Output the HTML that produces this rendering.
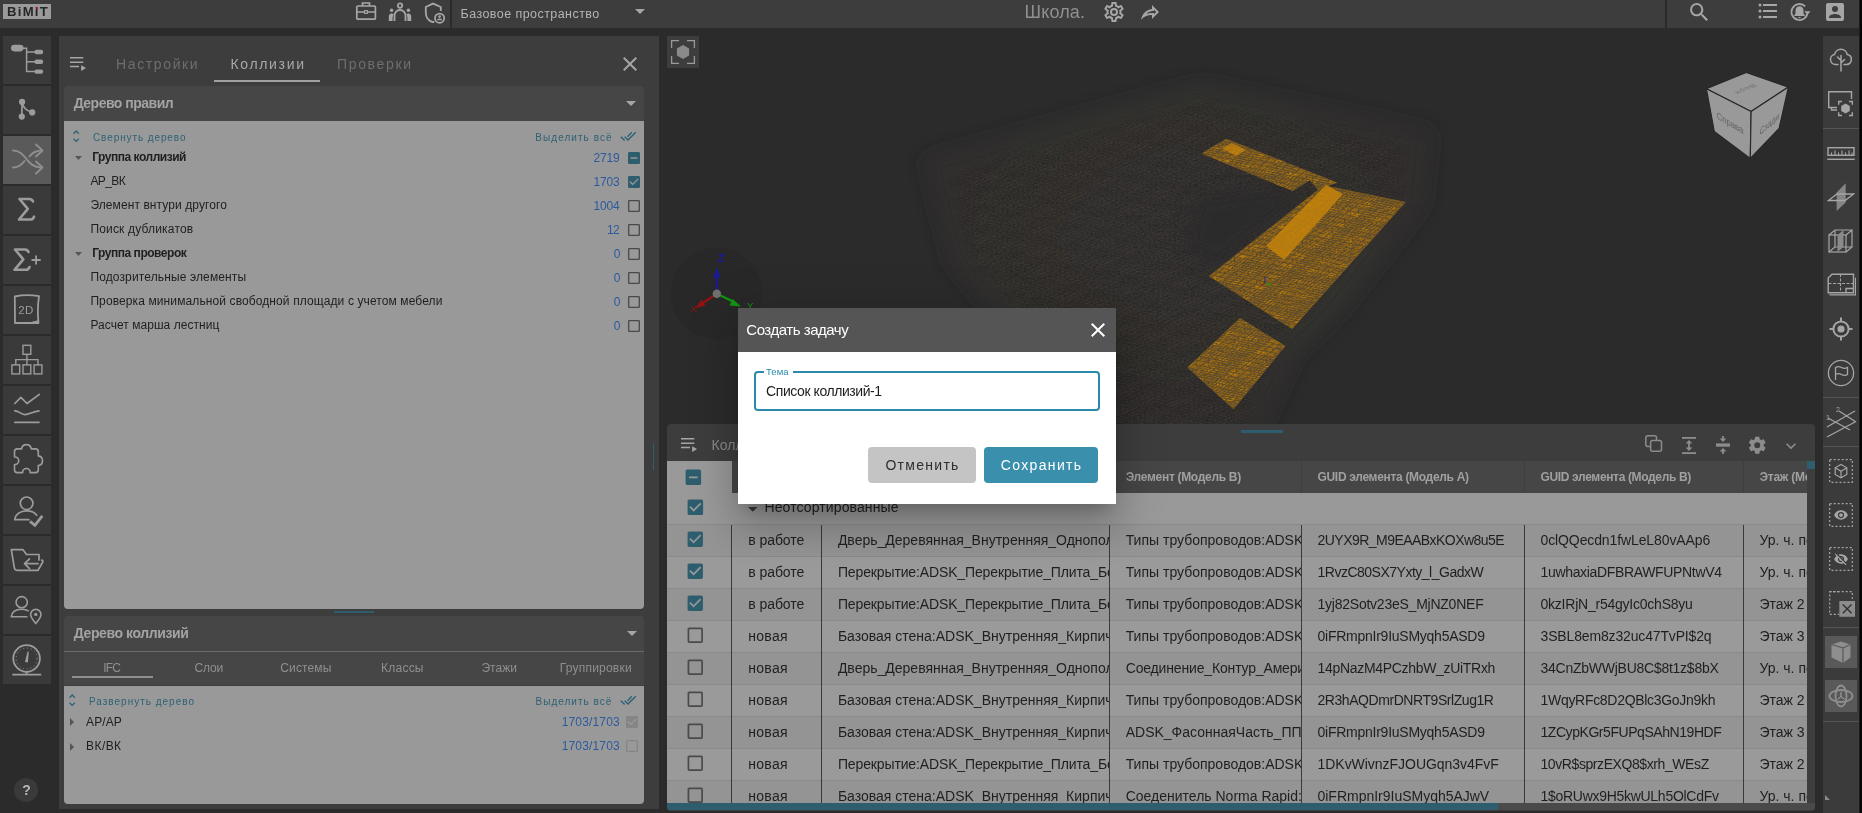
<!DOCTYPE html>
<html lang="ru"><head><meta charset="utf-8"><title>BIMIT</title><style>
html,body{margin:0;padding:0;}
body{width:1862px;height:813px;overflow:hidden;background:#2c2b2c;position:relative;font-family:"Liberation Sans",sans-serif;}
#app{position:absolute;left:0;top:0;width:1862px;height:813px;overflow:hidden;will-change:transform;}
.r{position:absolute;display:block;}
.t{position:absolute;white-space:nowrap;display:block;}
</style></head><body>
<div id="app">
<div class="r" style="left:0.0px;top:0.0px;width:1862.0px;height:28.0px;background:#3d3d3d;"></div>
<div class="r" style="left:3.0px;top:4.0px;width:48.0px;height:15.0px;background:#9a9a9a;"></div>
<span class="t" style="left:6.800px;top:3.600px;font-size:12.500px;line-height:16px;color:#262626;font-weight:700;letter-spacing:1.200px;transform:scaleX(1.05);transform-origin:0 0;">BiMiT</span>
<div class="r" style="left:35.9px;top:6.9px;width:2.2px;height:2.2px;background:#a81a1a;"></div>
<svg class="r" style="left:355px;top:1px" width="22" height="20" viewBox="0 0 22 20"><g fill="none" stroke="#a6a6a6" stroke-width="1.700"><rect x="1.800" y="5" width="18.600" height="13.200" rx="1"/><path d="M7.500 5V2h7v3M1.800 11h7.700M12.500 11h7.900"/><rect x="9.500" y="9.700" width="3" height="2.600" stroke-width="1.200"/></g></svg>
<svg class="r" style="left:388px;top:1px" width="24" height="22" viewBox="0 0 24 22"><g fill="none" stroke="#a6a6a6" stroke-width="1.8"><circle cx="12" cy="4.6" r="2.2"/><path d="M6.5 20v-5.5a5.5 5.5 0 0 1 11 0V20"/></g><g fill="#a6a6a6"><circle cx="3.6" cy="9.2" r="1.7"/><circle cx="20.4" cy="9.2" r="1.7"/><path d="M0.8 20v-4.5a3 3 0 0 1 4.8-2.4a8 8 0 0 0-1 3.9v3z"/><path d="M23.2 20v-4.5a3 3 0 0 0-4.8-2.4a8 8 0 0 1 1 3.9v3z"/></g></svg>
<svg class="r" style="left:424px;top:1px" width="22" height="24" viewBox="0 0 22 24"><g fill="none" stroke="#a6a6a6" stroke-width="1.8"><path d="M16.8 10V6L9 2.6L1.8 6v5.4c0 4.6 3 8.4 7.2 9.8c0.5-0.15 1-0.35 1.4-0.6"/><circle cx="15.6" cy="17.2" r="4.6"/></g><g fill="#a6a6a6"><circle cx="15.6" cy="15.6" r="1.3"/><path d="M12.9 19.3c0-1.2 1.8-1.8 2.7-1.8s2.7 0.6 2.7 1.8z"/></g></svg>
<div class="r" style="left:450.0px;top:0.0px;width:2.0px;height:28.0px;background:#2c2b2c;"></div>
<span class="t" id="t1" style="top:5.1px;font-size:12.5px;line-height:18px;color:#b4b4b4;left:460.5px;letter-spacing:0.441px;">Базовое пространство</span>
<svg class="r" style="left:635px;top:9px" width="10" height="5" viewBox="0 0 10 5"><path fill="#a6a6a6" d="M0 0h10L5 5z"/></svg>
<span class="t" id="t2" style="top:-0.2px;font-size:18px;line-height:25px;color:#909090;left:1024.5px;letter-spacing:0.156px;">Школа.</span>
<svg class="r" style="left:1101.7px;top:0.0px;" width="24" height="24" viewBox="0 0 24 24"><path fill="#a6a6a6" d="M12,8A4,4 0 0,1 16,12A4,4 0 0,1 12,16A4,4 0 0,1 8,12A4,4 0 0,1 12,8M12,10A2,2 0 0,0 10,12A2,2 0 0,0 12,14A2,2 0 0,0 14,12A2,2 0 0,0 12,10M10,22C9.75,22 9.54,21.82 9.5,21.58L9.13,18.93C8.5,18.68 7.96,18.34 7.44,17.94L4.95,18.95C4.73,19.03 4.46,18.95 4.34,18.73L2.34,15.27C2.21,15.05 2.27,14.78 2.46,14.63L4.57,12.97L4.5,12L4.57,11L2.46,9.37C2.27,9.22 2.21,8.95 2.34,8.73L4.34,5.27C4.46,5.05 4.73,4.96 4.95,5.05L7.44,6.05C7.96,5.66 8.5,5.32 9.13,5.07L9.5,2.42C9.54,2.18 9.75,2 10,2H14C14.25,2 14.46,2.18 14.5,2.42L14.87,5.07C15.5,5.32 16.04,5.66 16.56,6.05L19.05,5.05C19.27,4.96 19.54,5.05 19.66,5.27L21.66,8.73C21.79,8.95 21.73,9.22 21.54,9.37L19.43,11L19.5,12L19.43,13L21.54,14.63C21.73,14.78 21.79,15.05 21.66,15.27L19.66,18.73C19.54,18.95 19.27,19.04 19.05,18.95L16.56,17.95C16.04,18.34 15.5,18.68 14.87,18.93L14.5,21.58C14.46,21.82 14.25,22 14,22H10M11.25,4L10.88,6.61C9.68,6.86 8.62,7.5 7.85,8.39L5.44,7.35L4.69,8.65L6.8,10.2C6.4,11.37 6.4,12.64 6.8,13.8L4.68,15.36L5.43,16.66L7.86,15.62C8.63,16.5 9.68,17.14 10.87,17.38L11.24,20H12.76L13.13,17.39C14.32,17.14 15.37,16.5 16.14,15.62L18.57,16.66L19.32,15.36L17.2,13.81C17.6,12.64 17.6,11.37 17.2,10.2L19.31,8.65L18.56,7.35L16.15,8.39C15.38,7.5 14.32,6.86 13.12,6.62L12.75,4H11.25Z"/></svg>
<svg class="r" style="left:1137.8px;top:0.3px;" width="24" height="24" viewBox="0 0 24 24"><path fill="#a6a6a6" d="M14,5V9C7,10 4,15 3,20C5.5,16.5 9,14.9 14,14.9V19L21,12L14,5M16,9.83L18.17,12L16,14.17V12.9H14C11.93,12.9 10.07,13.28 8.34,13.85C9.74,12.46 11.54,11.37 14.28,11L16,10.73V9.83Z"/></svg>
<div class="r" style="left:1665.0px;top:0.0px;width:2.0px;height:28.0px;background:#2c2b2c;"></div>
<svg class="r" style="left:1687.2px;top:0.3px;" width="24.5" height="24.5" viewBox="0 0 24 24"><path fill="#a6a6a6" d="M9.5,3A6.5,6.5 0 0,1 16,9.5C16,11.11 15.41,12.59 14.44,13.73L14.71,14H15.5L20.5,19L19,20.5L14,15.5V14.71L13.73,14.44C12.59,15.41 11.11,16 9.5,16A6.5,6.5 0 0,1 3,9.5A6.5,6.5 0 0,1 9.5,3M9.5,5C7,5 5,7 5,9.5C5,12 7,14 9.5,14C12,14 14,12 14,9.5C14,7 12,5 9.5,5Z"/></svg>
<svg class="r" style="left:1755.7px;top:-0.6px;" width="24" height="24" viewBox="0 0 24 24"><path fill="#a6a6a6" d="M7,5H21V7H7V5M7,13V11H21V13H7M4,4.5A1.5,1.5 0 0,1 5.5,6A1.5,1.5 0 0,1 4,7.5A1.5,1.5 0 0,1 2.5,6A1.5,1.5 0 0,1 4,4.5M4,10.5A1.5,1.5 0 0,1 5.5,12A1.5,1.5 0 0,1 4,13.5A1.5,1.5 0 0,1 2.5,12A1.5,1.5 0 0,1 4,10.5M7,19V17H21V19H7M4,16.5A1.5,1.5 0 0,1 5.5,18A1.5,1.5 0 0,1 4,19.5A1.5,1.5 0 0,1 2.5,18A1.5,1.5 0 0,1 4,16.5Z"/></svg>
<svg class="r" style="left:1788.300px;top:0px" width="24" height="24" viewBox="0 0 24 24"><path fill="none" stroke="#a6a6a6" stroke-width="1.8" d="M19.500 12a8 8 0 1 1-2.300-5.600"/><path fill="#a6a6a6" d="M16.2 11.2h6.4l-3.2 3.6zM11.500 6.2c-2.4 0-4 1.800-4 4.200v3.200l-1.300 1.600v0.800h10.600v-0.800l-1.300-1.600v-3.200c0-2.400-1.600-4.200-4-4.200zM10.200 17h2.600a1.300 1.300 0 0 1-2.600 0z"/></svg>
<svg class="r" style="left:1823.0px;top:0.0px;" width="24" height="24" viewBox="0 0 24 24"><path fill="#a6a6a6" d="M6,17C6,15 10,13.9 12,13.9C14,13.9 18,15 18,17V18H6M15,9A3,3 0 0,1 12,12A3,3 0 0,1 9,9A3,3 0 0,1 12,6A3,3 0 0,1 15,9M3,5V19A2,2 0 0,0 5,21H19A2,2 0 0,0 21,19V5A2,2 0 0,0 19,3H5C3.89,3 3,3.9 3,5Z"/></svg>
<div class="r" style="left:3.0px;top:36.0px;width:48.0px;height:48.0px;background:#3a3a3a;"></div>
<div class="r" style="left:3.0px;top:86.0px;width:48.0px;height:48.0px;background:#3a3a3a;"></div>
<div class="r" style="left:3.0px;top:136.0px;width:48.0px;height:48.0px;background:#5a5a5a;"></div>
<div class="r" style="left:3.0px;top:186.0px;width:48.0px;height:48.0px;background:#3a3a3a;"></div>
<div class="r" style="left:3.0px;top:236.0px;width:48.0px;height:48.0px;background:#3a3a3a;"></div>
<div class="r" style="left:3.0px;top:286.0px;width:48.0px;height:48.0px;background:#3a3a3a;"></div>
<div class="r" style="left:3.0px;top:336.0px;width:48.0px;height:48.0px;background:#3a3a3a;"></div>
<div class="r" style="left:3.0px;top:386.0px;width:48.0px;height:48.0px;background:#3a3a3a;"></div>
<div class="r" style="left:3.0px;top:436.0px;width:48.0px;height:48.0px;background:#3a3a3a;"></div>
<div class="r" style="left:3.0px;top:486.0px;width:48.0px;height:48.0px;background:#3a3a3a;"></div>
<div class="r" style="left:3.0px;top:536.0px;width:48.0px;height:48.0px;background:#3a3a3a;"></div>
<div class="r" style="left:3.0px;top:586.0px;width:48.0px;height:48.0px;background:#3a3a3a;"></div>
<div class="r" style="left:3.0px;top:636.0px;width:48.0px;height:48.0px;background:#3a3a3a;"></div>
<svg class="r" style="left:3px;top:36px" width="48" height="48" viewBox="0 0 48 48"><g fill="#9c9c9c"><rect x="8" y="8.800" width="12.500" height="6.600" rx="3.300"/><rect x="31.400" y="13.800" width="8.800" height="4.400" rx="2.200"/><rect x="31.400" y="23.600" width="8.800" height="4.400" rx="2.200"/><rect x="31.400" y="33.400" width="8.800" height="4.400" rx="2.200"/></g><path d="M19 12.200h4.600V35.600H32M23.600 16H32M23.600 25.800H32" fill="none" stroke="#9c9c9c" stroke-width="1.500"/></svg>
<svg class="r" style="left:3px;top:86px" width="48" height="48" viewBox="0 0 48 48"><g fill="#9c9c9c"><circle cx="19.100" cy="15.900" r="3.100"/><circle cx="18.800" cy="30.600" r="3.100"/><circle cx="29.200" cy="26.400" r="3.100"/></g><path d="M19.100 16L18.800 30.600M19.100 16c0.500 5 4 8.500 10 10.400" fill="none" stroke="#9c9c9c" stroke-width="1.700"/></svg>
<svg class="r" style="left:3px;top:136px" width="48" height="48" viewBox="0 0 48 48"><g fill="none" stroke="#8e8e8e" stroke-width="1.900" stroke-linecap="round" stroke-linejoin="round"><path d="M10 14.500c14 0 12 17 29 17M10 31.500c6 0 9-3 11.500-6.500M26.500 20.500c2.500-3.500 6-6 12.500-6"/><path d="M33 8.500l6.500 6l-6.500 6M33 25.500l6.500 6l-6.500 6"/></g></svg>
<svg class="r" style="left:3px;top:186px" width="48" height="48" viewBox="0 0 48 48"><path d="M30 15.500c-1-2.200-2-2.500-3.500-2.500H16.500l8.300 9.800L16 33.500h11.500c1.500 0 2.800-0.800 3.500-2.800" fill="none" stroke="#9c9c9c" stroke-width="2.600" stroke-linecap="round" stroke-linejoin="round"/></svg>
<svg class="r" style="left:3px;top:236px" width="48" height="48" viewBox="0 0 48 48"><path d="M25.500 16c-1-2.200-2-2.500-3.500-2.500H12l8.300 9.800L11.500 33.800H23c1.500 0 2.800-0.800 3.500-2.800" fill="none" stroke="#9c9c9c" stroke-width="2.600" stroke-linecap="round" stroke-linejoin="round"/><path d="M28.500 24h9.200M33.100 19.400v9.200" stroke="#9c9c9c" stroke-width="1.800"/></svg>
<svg class="r" style="left:3px;top:286px" width="48" height="48" viewBox="0 0 48 48"><path d="M11.800 10.500c8-1.800 16-1.800 24.200-0.300c-1.300 9-1.500 18-0.500 26.800H12z" fill="none" stroke="#9c9c9c" stroke-width="1.800" stroke-linejoin="round"/><path d="M26 36.500l9-2.300v2.500z" fill="#9c9c9c"/><text x="15.300" y="28.300" font-family="Liberation Sans, sans-serif" font-size="11.500" fill="#9c9c9c" letter-spacing="0.3">2D</text></svg>
<svg class="r" style="left:3px;top:336px" width="48" height="48" viewBox="0 0 48 48"><g fill="none" stroke="#9c9c9c" stroke-width="1.400"><rect x="20" y="9.300" width="7.800" height="9"/><rect x="8.900" y="28.900" width="7.800" height="9"/><rect x="20" y="28.900" width="7.800" height="9"/><rect x="31.100" y="28.900" width="7.800" height="9"/><path d="M23.900 18.300v10.600M12.800 28.900v-5.300H35v5.300"/></g></svg>
<svg class="r" style="left:3px;top:386px" width="48" height="48" viewBox="0 0 48 48"><g fill="none" stroke="#9c9c9c" stroke-width="1.700" stroke-linecap="round" stroke-linejoin="round"><path d="M11.800 17.500l6.100-6.200l6.100 6.200L36.400 8.400"/><path d="M11.800 24.900c3.500-0.500 6 3.500 10 3.700c4 0.200 8-3 14.200-3.700"/><path d="M11.800 36.300H36"/></g></svg>
<svg class="r" style="left:3px;top:436px" width="48" height="48" viewBox="0 0 48 48"><g transform="translate(8.700 5.850) scale(1.4)"><path fill="none" stroke="#9c9c9c" stroke-width="1.150" stroke-linejoin="round" d="M22,13.500C22,15.260 20.700,16.720 19,16.960V20A2,2 0 0,1 17,22H13.200V21.700A2.700,2.700 0 0,0 10.500,19C9,19 7.800,20.210 7.800,21.700V22H4A2,2 0 0,1 2,20V16.200H2.300C3.790,16.200 5,15 5,13.500C5,12 3.790,10.800 2.300,10.800H2V7A2,2 0 0,1 4,5H7.040C7.280,3.300 8.740,2 10.500,2C12.260,2 13.720,3.300 13.960,5H17A2,2 0 0,1 19,7V10.040C20.700,10.280 22,11.740 22,13.500Z"/></g></svg>
<svg class="r" style="left:3px;top:486px" width="48" height="48" viewBox="0 0 48 48"><g fill="none" stroke="#9c9c9c" stroke-width="1.700"><circle cx="23.600" cy="17.300" r="6.300"/><path d="M26.500 33.700H11.800c0.500-5 5-8.800 11.800-8.800c5 0 8.500 1.800 10.500 4.800"/></g><path d="M27 35.300l4.900 4l7.400-9.500" fill="none" stroke="#9c9c9c" stroke-width="2.800"/></svg>
<svg class="r" style="left:3px;top:536px" width="48" height="48" viewBox="0 0 48 48"><g fill="none" stroke="#9c9c9c" stroke-width="1.700" stroke-linejoin="round" stroke-linecap="round"><path d="M36 24v-5.500H23.500L20 13.700H8.300l3 18c0.300 1.800 1 2.600 2.800 2.600H35l4.800-8.300c0.300-1-0.200-1.800-1.200-1.800"/><path d="M22 27.700h13M26.500 22.800l-5 4.900l5 4.900"/></g></svg>
<svg class="r" style="left:3px;top:586px" width="48" height="48" viewBox="0 0 48 48"><g fill="none" stroke="#9c9c9c" stroke-width="1.600"><circle cx="18.700" cy="16.200" r="5.600"/><path d="M24.500 30.800H8.300c0.500-4.600 4.400-7.600 10.400-7.600c3 0 5.300 0.700 7 2"/><path d="M32.800 37.500c-3.500-4-5.200-6.500-5.200-8.900a5.200 5.200 0 0 1 10.400 0c0 2.400-1.700 4.900-5.200 8.900z"/></g><circle cx="32.800" cy="28.400" r="1.700" fill="#9c9c9c"/></svg>
<svg class="r" style="left:3px;top:636px" width="48" height="48" viewBox="0 0 48 48"><g fill="none" stroke="#9c9c9c" stroke-width="1.800"><circle cx="23.600" cy="22.500" r="13.300"/><path d="M23.600 35.800v2.500M9.300 38.600h29"/></g><circle cx="23.600" cy="22.500" r="10.500" fill="none" stroke="#9c9c9c" stroke-width="0.800" stroke-dasharray="1.200 2.600"/><path d="M22 26l2.500-10.500l1.300 0.300l-0.900 10.800z" fill="#9c9c9c"/></svg>
<div class="r" style="left:14px;top:778px;width:24px;height:24px;border-radius:12px;background:#3a3a3a"></div>
<span class="t" id="t3" style="top:780.0px;font-size:14px;line-height:20px;color:#b8b8b8;left:22.2px;font-weight:700;">?</span>
<div class="r" style="left:59.0px;top:36.0px;width:600.0px;height:773.0px;background:#3d3d3d;"></div>
<svg class="r" style="left:69px;top:56px" width="18" height="16" viewBox="0 0 18 16"><path d="M1 1.800h13.300M1 6.200h13.300M1 10.600h9" stroke="#a6a6a6" stroke-width="1.500" fill="none"/><path d="M12.200 9.200v5.800l4.800-2.900z" fill="#a6a6a6"/></svg>
<span class="t" id="t4" style="top:54.0px;font-size:14px;line-height:20px;color:#6e6e6e;left:116.0px;letter-spacing:1.630px;">Настройки</span>
<span class="t" id="t5" style="top:54.0px;font-size:14px;line-height:20px;color:#a8a8a8;left:230.5px;letter-spacing:1.663px;">Коллизии</span>
<span class="t" id="t6" style="top:54.0px;font-size:14px;line-height:20px;color:#6e6e6e;left:337.0px;letter-spacing:1.652px;">Проверки</span>
<div class="r" style="left:214.0px;top:80.0px;width:106.0px;height:2.0px;background:#a0a0a0;"></div>
<svg class="r" style="left:618.3px;top:52.3px;" width="24" height="24" viewBox="0 0 24 24"><path fill="#a6a6a6" d="M19,6.41L17.59,5L12,10.59L6.41,5L5,6.41L10.59,12L5,17.59L6.41,19L12,13.41L17.59,19L19,17.59L13.41,12L19,6.41Z"/></svg>
<div class="r" style="left:64.0px;top:86.0px;width:580.0px;height:35.0px;background:#464646;border-radius:4px 4px 0 0;"></div>
<span class="t" id="t7" style="top:93.0px;font-size:14px;line-height:20px;color:#a3a3a3;left:73.7px;font-weight:700;letter-spacing:-0.504px;">Дерево правил</span>
<svg class="r" style="left:626px;top:101px" width="10" height="5" viewBox="0 0 10 5"><path fill="#a6a6a6" d="M0 0h10L5 5z"/></svg>
<div class="r" style="left:64.0px;top:121.0px;width:580.0px;height:487.5px;background:#999999;border-radius:0 0 4px 4px;"></div>
<svg class="r" style="left:67.6px;top:128.0px;" width="16.4" height="16.4" viewBox="0 0 24 24"><path fill="#2e6175" d="M12,18.17L8.83,15L7.41,16.41L12,21L16.59,16.41L15.17,15M12,5.83L15.17,9L16.58,7.59L12,3L7.41,7.59L8.83,9L12,5.83Z"/></svg>
<span class="t" id="t8" style="top:131.0px;font-size:10px;line-height:14px;color:#2e6175;left:93.0px;letter-spacing:0.898px;">Свернуть дерево</span>
<span class="t" id="t9" style="top:131.0px;font-size:10px;line-height:14px;color:#2e6175;left:535.3px;letter-spacing:1.047px;">Выделить всё</span>
<svg class="r" style="left:620.0px;top:127.8px;" width="16.5" height="16.5" viewBox="0 0 24 24"><path fill="#2e6175" d="M0.41,13.41L6,19L7.41,17.58L1.83,12M22.24,5.58L11.66,16.17L7.5,12L6.07,13.41L11.66,19L23.66,7M18,7L16.59,5.58L10.24,11.93L11.66,13.34L18,7Z"/></svg>
<svg class="r" style="left:74.500px;top:156.3px" width="7" height="4" viewBox="0 0 7 4"><path fill="#555" d="M0 0h7L3.5 4z"/></svg>
<span class="t" id="t10" style="top:148.8px;font-size:12px;line-height:17px;color:#1f1f1f;left:92.2px;font-weight:700;letter-spacing:-0.473px;">Группа коллизий</span>
<span class="t" id="t11" style="top:149.9px;font-size:12px;line-height:17px;color:#2c5a9e;left:593.4px;letter-spacing:-0.101px;">2719</span>
<svg class="r" style="left:626.0px;top:149.8px;" width="16" height="16" viewBox="0 0 24 24"><path fill="#2e5e6e" d="M17,13H7V11H17M19,3H5C3.89,3 3,3.89 3,5V19A2,2 0 0,0 5,21H19A2,2 0 0,0 21,19V5C21,3.89 20.1,3 19,3Z"/></svg>
<span class="t" id="t12" style="top:172.8px;font-size:12px;line-height:17px;color:#1f1f1f;left:90.4px;letter-spacing:-0.572px;">АР_ВК</span>
<span class="t" id="t13" style="top:173.9px;font-size:12px;line-height:17px;color:#2c5a9e;left:593.4px;letter-spacing:-0.101px;">1703</span>
<svg class="r" style="left:626.0px;top:173.8px;" width="16" height="16" viewBox="0 0 24 24"><path fill="#2e5e6e" d="M10,17L5,12L6.41,10.58L10,14.17L17.59,6.58L19,8M19,3H5C3.89,3 3,3.89 3,5V19A2,2 0 0,0 5,21H19A2,2 0 0,0 21,19V5C21,3.89 20.1,3 19,3Z"/></svg>
<span class="t" id="t14" style="top:196.8px;font-size:12px;line-height:17px;color:#1f1f1f;left:90.4px;letter-spacing:0.090px;">Элемент внтури другого</span>
<span class="t" id="t15" style="top:197.9px;font-size:12px;line-height:17px;color:#2c5a9e;left:593.4px;letter-spacing:-0.101px;">1004</span>
<svg class="r" style="left:626.0px;top:197.8px;" width="16" height="16" viewBox="0 0 24 24"><path fill="#4a4a4a" d="M19,3H5C3.89,3 3,3.89 3,5V19A2,2 0 0,0 5,21H19A2,2 0 0,0 21,19V5C21,3.89 20.1,3 19,3M19,5V19H5V5H19Z"/></svg>
<span class="t" id="t16" style="top:220.8px;font-size:12px;line-height:17px;color:#1f1f1f;left:90.4px;letter-spacing:0.179px;">Поиск дубликатов</span>
<span class="t" id="t17" style="top:221.9px;font-size:12px;line-height:17px;color:#2c5a9e;left:607.0px;letter-spacing:-0.559px;">12</span>
<svg class="r" style="left:626.0px;top:221.8px;" width="16" height="16" viewBox="0 0 24 24"><path fill="#4a4a4a" d="M19,3H5C3.89,3 3,3.89 3,5V19A2,2 0 0,0 5,21H19A2,2 0 0,0 21,19V5C21,3.89 20.1,3 19,3M19,5V19H5V5H19Z"/></svg>
<svg class="r" style="left:74.500px;top:252.3px" width="7" height="4" viewBox="0 0 7 4"><path fill="#555" d="M0 0h7L3.5 4z"/></svg>
<span class="t" id="t18" style="top:244.8px;font-size:12px;line-height:17px;color:#1f1f1f;left:92.2px;font-weight:700;letter-spacing:-0.469px;">Группа проверок</span>
<span class="t" id="t19" style="top:245.9px;font-size:12px;line-height:17px;color:#2c5a9e;left:613.7px;letter-spacing:-0.588px;">0</span>
<svg class="r" style="left:626.0px;top:245.8px;" width="16" height="16" viewBox="0 0 24 24"><path fill="#4a4a4a" d="M19,3H5C3.89,3 3,3.89 3,5V19A2,2 0 0,0 5,21H19A2,2 0 0,0 21,19V5C21,3.89 20.1,3 19,3M19,5V19H5V5H19Z"/></svg>
<span class="t" id="t20" style="top:268.8px;font-size:12px;line-height:17px;color:#1f1f1f;left:90.4px;letter-spacing:0.131px;">Подозрительные элементы</span>
<span class="t" id="t21" style="top:269.9px;font-size:12px;line-height:17px;color:#2c5a9e;left:613.7px;letter-spacing:-0.588px;">0</span>
<svg class="r" style="left:626.0px;top:269.8px;" width="16" height="16" viewBox="0 0 24 24"><path fill="#4a4a4a" d="M19,3H5C3.89,3 3,3.89 3,5V19A2,2 0 0,0 5,21H19A2,2 0 0,0 21,19V5C21,3.89 20.1,3 19,3M19,5V19H5V5H19Z"/></svg>
<span class="t" id="t22" style="top:292.8px;font-size:12px;line-height:17px;color:#1f1f1f;left:90.4px;letter-spacing:0.107px;">Проверка минимальной свободной площади с учетом мебели</span>
<span class="t" id="t23" style="top:293.9px;font-size:12px;line-height:17px;color:#2c5a9e;left:613.7px;letter-spacing:-0.588px;">0</span>
<svg class="r" style="left:626.0px;top:293.8px;" width="16" height="16" viewBox="0 0 24 24"><path fill="#4a4a4a" d="M19,3H5C3.89,3 3,3.89 3,5V19A2,2 0 0,0 5,21H19A2,2 0 0,0 21,19V5C21,3.89 20.1,3 19,3M19,5V19H5V5H19Z"/></svg>
<span class="t" id="t24" style="top:316.8px;font-size:12px;line-height:17px;color:#1f1f1f;left:90.4px;letter-spacing:0.042px;">Расчет марша лестниц</span>
<span class="t" id="t25" style="top:317.9px;font-size:12px;line-height:17px;color:#2c5a9e;left:613.7px;letter-spacing:-0.588px;">0</span>
<svg class="r" style="left:626.0px;top:317.8px;" width="16" height="16" viewBox="0 0 24 24"><path fill="#4a4a4a" d="M19,3H5C3.89,3 3,3.89 3,5V19A2,2 0 0,0 5,21H19A2,2 0 0,0 21,19V5C21,3.89 20.1,3 19,3M19,5V19H5V5H19Z"/></svg>
<div class="r" style="left:652.6px;top:443.0px;width:1.5px;height:27.0px;background:#2e5e6e;"></div>
<div class="r" style="left:334.0px;top:610.5px;width:40.0px;height:2.0px;background:#2e5e6e;"></div>
<div class="r" style="left:64.0px;top:616.0px;width:580.0px;height:69.0px;background:#464646;border-radius:4px 4px 0 0;"></div>
<span class="t" id="t26" style="top:623.3px;font-size:14px;line-height:20px;color:#a3a3a3;left:73.8px;font-weight:700;letter-spacing:-0.410px;">Дерево коллизий</span>
<svg class="r" style="left:627px;top:631px" width="10" height="5" viewBox="0 0 10 5"><path fill="#a6a6a6" d="M0 0h10L5 5z"/></svg>
<div class="r" style="left:64.0px;top:651.0px;width:580.0px;height:1.0px;background:#6a6a6a;"></div>
<span class="t" id="t27" style="top:660.1px;font-size:12px;line-height:17px;color:#8f8f8f;left:103.3px;letter-spacing:-0.822px;">IFC</span>
<span class="t" id="t28" style="top:660.1px;font-size:12px;line-height:17px;color:#8f8f8f;left:194.6px;letter-spacing:-0.196px;">Слои</span>
<span class="t" id="t29" style="top:660.1px;font-size:12px;line-height:17px;color:#8f8f8f;left:280.3px;letter-spacing:0.120px;">Системы</span>
<span class="t" id="t30" style="top:660.1px;font-size:12px;line-height:17px;color:#8f8f8f;left:381.0px;letter-spacing:0.241px;">Классы</span>
<span class="t" id="t31" style="top:660.1px;font-size:12px;line-height:17px;color:#8f8f8f;left:481.4px;letter-spacing:0.052px;">Этажи</span>
<span class="t" id="t32" style="top:660.1px;font-size:12px;line-height:17px;color:#8f8f8f;left:559.8px;letter-spacing:0.205px;">Группировки</span>
<div class="r" style="left:72.0px;top:676.0px;width:81.0px;height:2.0px;background:#8f8f8f;"></div>
<div class="r" style="left:64.0px;top:685.5px;width:580.0px;height:118.5px;background:#999999;border-radius:0 0 4px 4px;"></div>
<svg class="r" style="left:63.8px;top:692.1px;" width="16.4" height="16.4" viewBox="0 0 24 24"><path fill="#2e6175" d="M12,18.17L8.83,15L7.41,16.41L12,21L16.59,16.41L15.17,15M12,5.83L15.17,9L16.58,7.59L12,3L7.41,7.59L8.83,9L12,5.83Z"/></svg>
<span class="t" id="t33" style="top:695.0px;font-size:10px;line-height:14px;color:#2e6175;left:89.0px;letter-spacing:0.995px;">Развернуть дерево</span>
<span class="t" id="t34" style="top:695.0px;font-size:10px;line-height:14px;color:#2e6175;left:535.6px;letter-spacing:1.001px;">Выделить всё</span>
<svg class="r" style="left:620.0px;top:692.0px;" width="16.5" height="16.5" viewBox="0 0 24 24"><path fill="#2e6175" d="M0.41,13.41L6,19L7.41,17.58L1.83,12M22.24,5.58L11.66,16.17L7.5,12L6.07,13.41L11.66,19L23.66,7M18,7L16.59,5.58L10.24,11.93L11.66,13.34L18,7Z"/></svg>
<svg class="r" style="left:70px;top:718.2px" width="4" height="8" viewBox="0 0 4 8"><path fill="#555" d="M0 0v8L4 4z"/></svg>
<span class="t" id="t35" style="top:713.7px;font-size:12px;line-height:17px;color:#1f1f1f;left:86.1px;letter-spacing:0.085px;">АР/АР</span>
<span class="t" id="t36" style="top:713.7px;font-size:12px;line-height:17px;color:#2c5a9e;left:561.7px;letter-spacing:0.158px;">1703/1703</span>
<svg class="r" style="left:624.0px;top:713.7px;" width="16" height="16" viewBox="0 0 24 24"><path fill="#858585" d="M10,17L5,12L6.41,10.58L10,14.17L17.59,6.58L19,8M19,3H5C3.89,3 3,3.89 3,5V19A2,2 0 0,0 5,21H19A2,2 0 0,0 21,19V5C21,3.89 20.1,3 19,3Z"/></svg>
<svg class="r" style="left:70px;top:742.5px" width="4" height="8" viewBox="0 0 4 8"><path fill="#555" d="M0 0v8L4 4z"/></svg>
<span class="t" id="t37" style="top:738.0px;font-size:12px;line-height:17px;color:#1f1f1f;left:86.1px;letter-spacing:0.418px;">ВК/ВК</span>
<span class="t" id="t38" style="top:738.0px;font-size:12px;line-height:17px;color:#2c5a9e;left:561.7px;letter-spacing:0.158px;">1703/1703</span>
<svg class="r" style="left:624.0px;top:738.0px;" width="16" height="16" viewBox="0 0 24 24"><path fill="#858585" d="M19,3H5C3.89,3 3,3.89 3,5V19A2,2 0 0,0 5,21H19A2,2 0 0,0 21,19V5C21,3.89 20.1,3 19,3M19,5V19H5V5H19Z"/></svg>
<svg class="r" style="left:0;top:28px" width="1862" height="400" viewBox="0 28 1862 400">
<defs>
<pattern id="pu" width="40" height="6" patternUnits="userSpaceOnUse" patternTransform="matrix(0.98 0.2 -0.79 0.61 0 0)"><path d="M0 0.500H40M0 3.500H22" stroke="#5b4a2c" stroke-width="1.1" fill="none" opacity="0.9"/></pattern>
<pattern id="pv" width="7" height="40" patternUnits="userSpaceOnUse" patternTransform="matrix(0.98 0.2 -0.79 0.61 0 0)"><path d="M0.500 0V40M4 6V25" stroke="#5b4a2c" stroke-width="1.1" fill="none" opacity="0.85"/></pattern>
<pattern id="pw" width="23" height="17" patternUnits="userSpaceOnUse" patternTransform="matrix(0.98 0.2 -0.79 0.61 0 0)"><rect x="2" y="2" width="9" height="6" fill="#d08a08" opacity="0.55"/><rect x="13" y="9" width="7" height="5" fill="#6b5630" opacity="0.5"/></pattern>
<pattern id="bu" width="30" height="5" patternUnits="userSpaceOnUse" patternTransform="matrix(0.98 0.2 -0.9 0.42 0 0)"><path d="M0 0.500H30M4 3H19" stroke="#4b443e" stroke-width="0.9" fill="none" opacity="0.5"/></pattern>
<pattern id="bv" width="6" height="34" patternUnits="userSpaceOnUse" patternTransform="matrix(0.98 0.2 -0.9 0.42 0 0)"><path d="M0.500 0V34M3.500 5V21" stroke="#242222" stroke-width="0.9" fill="none" opacity="0.55"/></pattern>
<radialGradient id="bg1" cx="0.5" cy="0.42" r="0.62"><stop offset="0" stop-color="#363230"/><stop offset="0.6" stop-color="#33302f"/><stop offset="1" stop-color="#2e2c2c"/></radialGradient>
<filter id="bl" x="-10%" y="-10%" width="120%" height="120%"><feGaussianBlur stdDeviation="9"/></filter>
<filter id="bl1"><feGaussianBlur stdDeviation="0.7"/></filter>
<filter id="nz" x="0" y="0" width="100%" height="100%" color-interpolation-filters="sRGB"><feTurbulence type="fractalNoise" baseFrequency="0.45" numOctaves="2" seed="7" result="n"/><feColorMatrix in="n" values="0 0 0 0 0.12  0 0 0 0 0.11  0 0 0 0 0.11  1.3 0 0 0 -0.55" result="c"/><feComposite in="c" in2="SourceGraphic" operator="in"/></filter>
<filter id="nz2" x="0" y="0" width="100%" height="100%" color-interpolation-filters="sRGB"><feTurbulence type="fractalNoise" baseFrequency="0.5" numOctaves="2" seed="11" result="n"/><feColorMatrix in="n" values="0 0 0 0 0.33  0 0 0 0 0.27  0 0 0 0 0.16  2.2 0 0 0 -0.9" result="c"/><feComposite in="c" in2="SourceGraphic" operator="in"/></filter>
<filter id="bl8" x="-10%" y="-10%" width="120%" height="120%"><feGaussianBlur stdDeviation="9"/></filter>
<mask id="bm" maskUnits="userSpaceOnUse" x="880" y="40" width="600" height="420"><polygon points="948,172 1201,100 1408,144 1402,200 1322,300 1280,344 1240,440 1120,440 970,256" fill="#fff" filter="url(#bl8)"/></mask>
<clipPath id="vclip"><rect x="667" y="28" width="1156" height="396"/></clipPath>
</defs>
<g clip-path="url(#vclip)">
<polygon points="926,160 1201,84 1430,132 1422,206 1338,312 1296,354 1256,440 1100,440 952,262" fill="url(#bg1)" filter="url(#bl)"/>
<g mask="url(#bm)">
<polygon points="940,166 1201,92 1418,138 1411,203 1328,308 1286,350 1246,440 1112,440 962,258" fill="url(#bu)"/>
<polygon points="940,166 1201,92 1418,138 1411,203 1328,308 1286,350 1246,440 1112,440 962,258" fill="url(#bv)"/>
<polygon points="940,166 1201,92 1418,138 1411,203 1328,308 1286,350 1246,440 1112,440 962,258" fill="#000" filter="url(#nz)"/>
</g>
<polygon points="1196,196 1290,184 1300,200 1212,272 1186,246" fill="#2b2929" opacity="0.75" filter="url(#bl)"/>
<polygon points="1201.600,153.600 1226.200,138.800 1337,182.400 1318,190 1310,180 1292.600,191" fill="#9a6912" filter="url(#bl1)"/>
<polygon points="1201.600,153.600 1226.200,138.800 1337,182.400 1318,190 1310,180 1292.600,191" fill="url(#pw)"/>
<polygon points="1201.600,153.600 1226.200,138.800 1337,182.400 1318,190 1310,180 1292.600,191" fill="url(#pu)"/>
<polygon points="1201.600,153.600 1226.200,138.800 1337,182.400 1318,190 1310,180 1292.600,191" fill="url(#pv)"/>
<polygon points="1201.600,153.600 1226.200,138.800 1337,182.400 1318,190 1310,180 1292.600,191" fill="#000" filter="url(#nz2)"/>
<polygon points="1327,186 1405.700,202 1292,329 1209,276 1319.700,188.500" fill="#9a6912" filter="url(#bl1)"/>
<polygon points="1327,186 1405.700,202 1292,329 1209,276 1319.700,188.500" fill="url(#pw)"/>
<polygon points="1327,186 1405.700,202 1292,329 1209,276 1319.700,188.500" fill="url(#pu)"/>
<polygon points="1327,186 1405.700,202 1292,329 1209,276 1319.700,188.500" fill="url(#pv)"/>
<polygon points="1327,186 1405.700,202 1292,329 1209,276 1319.700,188.500" fill="#000" filter="url(#nz2)"/>
<polygon points="1240,318 1285.300,346 1233.600,409.300 1187.600,367.600" fill="#9a6912" filter="url(#bl1)"/>
<polygon points="1240,318 1285.300,346 1233.600,409.300 1187.600,367.600" fill="url(#pw)"/>
<polygon points="1240,318 1285.300,346 1233.600,409.300 1187.600,367.600" fill="url(#pu)"/>
<polygon points="1240,318 1285.300,346 1233.600,409.300 1187.600,367.600" fill="url(#pv)"/>
<polygon points="1240,318 1285.300,346 1233.600,409.300 1187.600,367.600" fill="#000" filter="url(#nz2)"/>
<polygon points="1326,185 1343,194 1284,260 1266,246" fill="#c9860a" opacity="0.8"/>
<polygon points="1222,148 1232,143 1246,150 1236,156" fill="#c9860a" opacity="0.7"/>
<path d="M1265 283v-6" stroke="#1a1a9a" stroke-width="1"/><path d="M1265 283l-4 3" stroke="#9a1010" stroke-width="1"/><path d="M1265 283l6 2" stroke="#109a10" stroke-width="1"/>
</g>
<circle cx="716.8" cy="293.8" r="45.8" fill="#292828"/>
<path d="M716.8 293.8V274" stroke="#1a1a98" stroke-width="2.2"/><path d="M716.8 267.500l-3.600 10h7.200z" fill="#1a1a98"/>
<path d="M716.800 293.800L702 303.500" stroke="#961212" stroke-width="2.2"/><path d="M695.500 308l6-8.500l4 6.200z" fill="#961212"/>
<path d="M716.800 293.800L732 301" stroke="#129612" stroke-width="2.2"/><path d="M741 306.500l-11.500-1l3.200-6.600z" fill="#129612"/>
<circle cx="716.8" cy="293.8" r="4.2" fill="#707070"/>
<text x="717.700" y="261.700" font-size="11.500" font-weight="700" fill="#1a1a98" font-family="Liberation Sans, sans-serif">Z</text>
<text x="690.700" y="312.200" font-size="9.500" fill="#961212" font-family="Liberation Sans, sans-serif">X</text>
<text x="747" y="309" font-size="9.500" fill="#129612" font-family="Liberation Sans, sans-serif">Y</text>
<g stroke="#2a2929" stroke-width="1.2" stroke-linejoin="round" fill="#999"><polygon points="1746.300,72.400 1788.400,87.100 1751.100,111.500 1706.400,88.800"/><polygon points="1706.400,88.800 1751.100,111.500 1750.300,158.400 1714.300,131.500"/><polygon points="1751.100,111.500 1788.400,87.100 1779.100,128.300 1750.300,158.400"/></g>
<g font-family="Liberation Sans, sans-serif" fill="#606060" font-size="9"><text transform="matrix(0.86,0.50,0.10,1.10,1717,118.500)">Справа</text><text transform="matrix(0.74,-0.64,-0.10,1.15,1759.500,135.500)">Сзади</text><text transform="matrix(-0.95,0.42,-0.75,-0.32,1753,84)" font-size="9" fill="#737373">Верх</text></g>
</svg>
<div class="r" style="left:667.0px;top:36.0px;width:32.0px;height:32.0px;background:#3d3d3d;"></div>
<svg class="r" style="left:667px;top:36px" width="32" height="32" viewBox="0 0 32 32"><path d="M12 4.600H4.600V12M20 4.600h7.400V12M12 27.400H4.600V20M20 27.400h7.400V20" fill="none" stroke="#9a9a9a" stroke-width="1.3"/><path d="M16 9l6.100 3.500v7L16 23l-6.100-3.500v-7z" fill="#8a8a8a"/></svg>
<div class="r" style="left:667.0px;top:424.0px;width:1148.0px;height:386.5px;background:#3d3d3d;border-radius:4px 4px 3px 3px;"></div>
<div class="r" style="left:1241.0px;top:430.0px;width:42.0px;height:2.5px;background:#2e5e6e;"></div>
<svg class="r" style="left:679.700px;top:436.900px" width="18" height="16" viewBox="0 0 18 16"><path d="M1 1.800h13.300M1 6.200h13.300M1 10.600h9" stroke="#a6a6a6" stroke-width="1.500" fill="none"/><path d="M12.200 9.200v5.800l4.800-2.900z" fill="#a6a6a6"/></svg>
<span class="t" id="t39" style="top:435.0px;font-size:14px;line-height:20px;color:#8a8a8a;left:711.4px;letter-spacing:0.092px;">Коллизии</span>
<svg class="r" style="left:1645.300px;top:435.100px" width="18" height="18" viewBox="0 0 18 18"><g fill="none" stroke="#8c8c8c" stroke-width="1.500"><path d="M5 11.500H2.800a2 2 0 0 1-2-2V2.800a2 2 0 0 1 2-2h6.700a2 2 0 0 1 2 2V5"/><rect x="5.600" y="5.600" width="10.900" height="10.600" rx="2"/></g></svg>
<svg class="r" style="left:1682px;top:436.900px" width="14" height="17" viewBox="0 0 14 17"><g fill="#8c8c8c"><rect x="0" y="0" width="14" height="1.800"/><rect x="0" y="15.200" width="14" height="1.800"/><rect x="6.100" y="5.500" width="1.800" height="6"/><path d="M7 3l3.400 3.600h-6.800zM7 14l3.400-3.600h-6.800z"/></g></svg>
<svg class="r" style="left:1716px;top:436.200px" width="14" height="18" viewBox="0 0 14 18"><g fill="#8c8c8c"><rect x="0" y="7.400" width="14" height="3.300"/><rect x="6.100" y="0" width="1.800" height="3.500"/><rect x="6.100" y="14.500" width="1.800" height="3.500"/><path d="M7 6l3.400-3.400h-6.800zM7 12l3.400 3.400h-6.800z"/></g></svg>
<svg class="r" style="left:1746.8px;top:434.8px;" width="20.5" height="20.5" viewBox="0 0 24 24"><path fill="#8c8c8c" d="M12,15.5A3.5,3.5 0 0,1 8.5,12A3.5,3.5 0 0,1 12,8.5A3.5,3.5 0 0,1 15.5,12A3.5,3.5 0 0,1 12,15.5M19.43,12.97C19.47,12.65 19.5,12.33 19.5,12C19.5,11.67 19.47,11.34 19.43,11L21.54,9.37C21.73,9.22 21.78,8.95 21.66,8.73L19.66,5.27C19.54,5.05 19.27,4.96 19.05,5.05L16.56,6.05C16.04,5.66 15.5,5.32 14.87,5.07L14.5,2.42C14.46,2.18 14.25,2 14,2H10C9.75,2 9.54,2.18 9.5,2.42L9.13,5.07C8.5,5.32 7.96,5.66 7.44,6.05L4.95,5.05C4.73,4.96 4.46,5.05 4.34,5.27L2.34,8.73C2.21,8.95 2.27,9.22 2.46,9.37L4.57,11C4.53,11.34 4.5,11.67 4.5,12C4.5,12.33 4.53,12.65 4.57,12.97L2.46,14.63C2.27,14.78 2.21,15.05 2.34,15.27L4.34,18.73C4.46,18.95 4.73,19.03 4.95,18.95L7.44,17.94C7.96,18.34 8.5,18.68 9.13,18.93L9.5,21.58C9.54,21.82 9.75,22 10,22H14C14.25,22 14.46,21.82 14.5,21.58L14.87,18.93C15.5,18.67 16.04,18.34 16.56,17.94L19.05,18.95C19.27,19.03 19.54,18.95 19.66,18.73L21.66,15.27C21.78,15.05 21.73,14.78 21.54,14.63L19.43,12.97Z"/></svg>
<svg class="r" style="left:1780.8px;top:435.7px;" width="20" height="20" viewBox="0 0 24 24"><path fill="#8c8c8c" d="M7.41,8.58L12,13.17L16.59,8.58L18,10L12,16L6,10L7.41,8.58Z"/></svg>
<div class="r" style="left:667.0px;top:461.0px;width:64.5px;height:31.7px;background:#999;"></div>
<div class="r" style="left:731.5px;top:461.0px;width:1075.9px;height:31.7px;background:#464646;"></div>
<div class="r" style="left:821.0px;top:461.0px;width:1.0px;height:31.7px;background:#3e3e3e;"></div>
<div class="r" style="left:1109.2px;top:461.0px;width:1.0px;height:31.7px;background:#3e3e3e;"></div>
<div class="r" style="left:1300.8px;top:461.0px;width:1.0px;height:31.7px;background:#3e3e3e;"></div>
<div class="r" style="left:1523.9px;top:461.0px;width:1.0px;height:31.7px;background:#3e3e3e;"></div>
<div class="r" style="left:1743.1px;top:461.0px;width:1.0px;height:31.7px;background:#3e3e3e;"></div>
<svg class="r" style="left:682.6px;top:466.6px;" width="20.7" height="20.7" viewBox="0 0 24 24"><path fill="#2e5e6e" d="M17,13H7V11H17M19,3H5C3.89,3 3,3.89 3,5V19A2,2 0 0,0 5,21H19A2,2 0 0,0 21,19V5C21,3.89 20.1,3 19,3Z"/></svg>
<span class="t" id="t40" style="top:468.5px;font-size:12px;line-height:17px;color:#a0a0a0;left:1125.7px;font-weight:700;letter-spacing:-0.305px;">Элемент (Модель B)</span>
<span class="t" id="t41" style="top:468.5px;font-size:12px;line-height:17px;color:#a0a0a0;left:1317.5px;font-weight:700;letter-spacing:-0.317px;">GUID элемента (Модель A)</span>
<span class="t" id="t42" style="top:468.5px;font-size:12px;line-height:17px;color:#a0a0a0;left:1540.5px;font-weight:700;letter-spacing:-0.347px;">GUID элемента (Модель B)</span>
<span class="t" id="t43" style="top:468.5px;font-size:12px;line-height:17px;color:#a0a0a0;left:1759.5px;font-weight:700;letter-spacing:-0.25px;width:47.9px;overflow:hidden;">Этаж (Модель A)</span>
<div class="r" style="left:667.0px;top:492.7px;width:1140.4px;height:310.8px;background:#999;"></div>
<svg class="r" style="left:684.6px;top:496.6px;" width="20.7" height="20.7" viewBox="0 0 24 24"><path fill="#2e5e6e" d="M10,17L5,12L6.41,10.58L10,14.17L17.59,6.58L19,8M19,3H5C3.89,3 3,3.89 3,5V19A2,2 0 0,0 5,21H19A2,2 0 0,0 21,19V5C21,3.89 20.1,3 19,3Z"/></svg>
<svg class="r" style="left:747.500px;top:507px" width="9.500" height="4.800" viewBox="0 0 10 5"><path fill="#3c3c3c" d="M0 0h10L5 5z"/></svg>
<span class="t" id="t44" style="top:497.3px;font-size:14px;line-height:20px;color:#1f1f1f;left:764.5px;letter-spacing:0.110px;">Неотсортированные</span>
<div class="r" style="left:667.0px;top:524.2px;width:1140.4px;height:32.0px;background:#949494;"></div>
<div class="r" style="left:667.0px;top:523.7px;width:1140.4px;height:1.0px;background:#8a8a8a;"></div>
<svg class="r" style="left:684.8px;top:529.0px;clip-path:inset(0 0 0.0px 0);" width="20.5" height="20.5" viewBox="0 0 24 24"><path fill="#2e5e6e" d="M10,17L5,12L6.41,10.58L10,14.17L17.59,6.58L19,8M19,3H5C3.89,3 3,3.89 3,5V19A2,2 0 0,0 5,21H19A2,2 0 0,0 21,19V5C21,3.89 20.1,3 19,3Z"/></svg>
<span class="t" id="t45" style="left:748.2px;top:530.0px;font-size:14px;line-height:20px;color:#1f1f1f;width:72.8px;overflow:hidden;letter-spacing:-0.048px;">в работе</span>
<span class="t" id="t46" style="left:837.9px;top:530.0px;font-size:14px;line-height:20px;color:#1f1f1f;width:271.3px;overflow:hidden;">Дверь_Деревянная_Внутренняя_Однопольная</span>
<span class="t" id="t47" style="left:1125.7px;top:530.0px;font-size:14px;line-height:20px;color:#1f1f1f;width:175.1px;overflow:hidden;">Типы трубопроводов:ADSK_</span>
<span class="t" id="t48" style="left:1317.5px;top:530.0px;font-size:14px;line-height:20px;color:#1f1f1f;width:206.4px;overflow:hidden;letter-spacing:-0.535px;">2UYX9R_M9EAABxKOXw8u5E</span>
<span class="t" id="t49" style="left:1540.5px;top:530.0px;font-size:14px;line-height:20px;color:#1f1f1f;width:202.6px;overflow:hidden;letter-spacing:-0.110px;">0clQQecdn1fwLeL80vAAp6</span>
<span class="t" id="t50" style="left:1759.5px;top:530.0px;font-size:14px;line-height:20px;color:#1f1f1f;width:47.4px;overflow:hidden;">Ур. ч. пола</span>
<div class="r" style="left:667.0px;top:556.2px;width:1140.4px;height:32.0px;background:#9a9a9a;"></div>
<div class="r" style="left:667.0px;top:555.7px;width:1140.4px;height:1.0px;background:#8a8a8a;"></div>
<svg class="r" style="left:684.8px;top:561.0px;clip-path:inset(0 0 0.0px 0);" width="20.5" height="20.5" viewBox="0 0 24 24"><path fill="#2e5e6e" d="M10,17L5,12L6.41,10.58L10,14.17L17.59,6.58L19,8M19,3H5C3.89,3 3,3.89 3,5V19A2,2 0 0,0 5,21H19A2,2 0 0,0 21,19V5C21,3.89 20.1,3 19,3Z"/></svg>
<span class="t" id="t51" style="left:748.2px;top:562.0px;font-size:14px;line-height:20px;color:#1f1f1f;width:72.8px;overflow:hidden;letter-spacing:-0.048px;">в работе</span>
<span class="t" id="t52" style="left:837.9px;top:562.0px;font-size:14px;line-height:20px;color:#1f1f1f;width:271.3px;overflow:hidden;letter-spacing:-0.130px;">Перекрытие:ADSK_Перекрытие_Плита_Бетон</span>
<span class="t" id="t53" style="left:1125.7px;top:562.0px;font-size:14px;line-height:20px;color:#1f1f1f;width:175.1px;overflow:hidden;">Типы трубопроводов:ADSK_</span>
<span class="t" id="t54" style="left:1317.5px;top:562.0px;font-size:14px;line-height:20px;color:#1f1f1f;width:206.4px;overflow:hidden;letter-spacing:-0.497px;">1RvzC80SX7Yxty_l_GadxW</span>
<span class="t" id="t55" style="left:1540.5px;top:562.0px;font-size:14px;line-height:20px;color:#1f1f1f;width:202.6px;overflow:hidden;letter-spacing:-0.335px;">1uwhaxiaDFBRAWFUPNtwV4</span>
<span class="t" id="t56" style="left:1759.5px;top:562.0px;font-size:14px;line-height:20px;color:#1f1f1f;width:47.4px;overflow:hidden;">Ур. ч. пола</span>
<div class="r" style="left:667.0px;top:588.2px;width:1140.4px;height:32.0px;background:#949494;"></div>
<div class="r" style="left:667.0px;top:587.7px;width:1140.4px;height:1.0px;background:#8a8a8a;"></div>
<svg class="r" style="left:684.8px;top:593.0px;clip-path:inset(0 0 0.0px 0);" width="20.5" height="20.5" viewBox="0 0 24 24"><path fill="#2e5e6e" d="M10,17L5,12L6.41,10.58L10,14.17L17.59,6.58L19,8M19,3H5C3.89,3 3,3.89 3,5V19A2,2 0 0,0 5,21H19A2,2 0 0,0 21,19V5C21,3.89 20.1,3 19,3Z"/></svg>
<span class="t" id="t57" style="left:748.2px;top:594.0px;font-size:14px;line-height:20px;color:#1f1f1f;width:72.8px;overflow:hidden;letter-spacing:-0.048px;">в работе</span>
<span class="t" id="t58" style="left:837.9px;top:594.0px;font-size:14px;line-height:20px;color:#1f1f1f;width:271.3px;overflow:hidden;letter-spacing:-0.130px;">Перекрытие:ADSK_Перекрытие_Плита_Бетон</span>
<span class="t" id="t59" style="left:1125.7px;top:594.0px;font-size:14px;line-height:20px;color:#1f1f1f;width:175.1px;overflow:hidden;">Типы трубопроводов:ADSK_</span>
<span class="t" id="t60" style="left:1317.5px;top:594.0px;font-size:14px;line-height:20px;color:#1f1f1f;width:206.4px;overflow:hidden;letter-spacing:-0.238px;">1yj82Sotv23eS_MjNZ0NEF</span>
<span class="t" id="t61" style="left:1540.5px;top:594.0px;font-size:14px;line-height:20px;color:#1f1f1f;width:202.6px;overflow:hidden;letter-spacing:-0.228px;">0kzIRjN_r54gyIc0chS8yu</span>
<span class="t" id="t62" style="left:1759.5px;top:594.0px;font-size:14px;line-height:20px;color:#1f1f1f;width:47.4px;overflow:hidden;">Этаж 2</span>
<div class="r" style="left:667.0px;top:620.2px;width:1140.4px;height:32.0px;background:#9a9a9a;"></div>
<div class="r" style="left:667.0px;top:619.7px;width:1140.4px;height:1.0px;background:#8a8a8a;"></div>
<svg class="r" style="left:684.8px;top:625.0px;clip-path:inset(0 0 0.0px 0);" width="20.5" height="20.5" viewBox="0 0 24 24"><path fill="#4a4a4a" d="M19,3H5C3.89,3 3,3.89 3,5V19A2,2 0 0,0 5,21H19A2,2 0 0,0 21,19V5C21,3.89 20.1,3 19,3M19,5V19H5V5H19Z"/></svg>
<span class="t" id="t63" style="left:748.2px;top:626.0px;font-size:14px;line-height:20px;color:#1f1f1f;width:72.8px;overflow:hidden;letter-spacing:0.332px;">новая</span>
<span class="t" id="t64" style="left:837.9px;top:626.0px;font-size:14px;line-height:20px;color:#1f1f1f;width:271.3px;overflow:hidden;">Базовая стена:ADSK_Внутренняя_Кирпичная</span>
<span class="t" id="t65" style="left:1125.7px;top:626.0px;font-size:14px;line-height:20px;color:#1f1f1f;width:175.1px;overflow:hidden;">Типы трубопроводов:ADSK_</span>
<span class="t" id="t66" style="left:1317.5px;top:626.0px;font-size:14px;line-height:20px;color:#1f1f1f;width:206.4px;overflow:hidden;letter-spacing:-0.250px;">0iFRmpnIr9IuSMyqh5ASD9</span>
<span class="t" id="t67" style="left:1540.5px;top:626.0px;font-size:14px;line-height:20px;color:#1f1f1f;width:202.6px;overflow:hidden;letter-spacing:-0.154px;">3SBL8em8z32uc47TvPI$2q</span>
<span class="t" id="t68" style="left:1759.5px;top:626.0px;font-size:14px;line-height:20px;color:#1f1f1f;width:47.4px;overflow:hidden;">Этаж 3</span>
<div class="r" style="left:667.0px;top:652.2px;width:1140.4px;height:32.0px;background:#949494;"></div>
<div class="r" style="left:667.0px;top:651.7px;width:1140.4px;height:1.0px;background:#8a8a8a;"></div>
<svg class="r" style="left:684.8px;top:657.0px;clip-path:inset(0 0 0.0px 0);" width="20.5" height="20.5" viewBox="0 0 24 24"><path fill="#4a4a4a" d="M19,3H5C3.89,3 3,3.89 3,5V19A2,2 0 0,0 5,21H19A2,2 0 0,0 21,19V5C21,3.89 20.1,3 19,3M19,5V19H5V5H19Z"/></svg>
<span class="t" id="t69" style="left:748.2px;top:658.0px;font-size:14px;line-height:20px;color:#1f1f1f;width:72.8px;overflow:hidden;letter-spacing:0.332px;">новая</span>
<span class="t" id="t70" style="left:837.9px;top:658.0px;font-size:14px;line-height:20px;color:#1f1f1f;width:271.3px;overflow:hidden;">Дверь_Деревянная_Внутренняя_Однопольная</span>
<span class="t" id="t71" style="left:1125.7px;top:658.0px;font-size:14px;line-height:20px;color:#1f1f1f;width:175.1px;overflow:hidden;letter-spacing:-0.160px;">Соединение_Контур_Америка</span>
<span class="t" id="t72" style="left:1317.5px;top:658.0px;font-size:14px;line-height:20px;color:#1f1f1f;width:206.4px;overflow:hidden;letter-spacing:-0.310px;">14pNazM4PCzhbW_zUiTRxh</span>
<span class="t" id="t73" style="left:1540.5px;top:658.0px;font-size:14px;line-height:20px;color:#1f1f1f;width:202.6px;overflow:hidden;letter-spacing:-0.254px;">34CnZbWWjBU8C$8t1z$8bX</span>
<span class="t" id="t74" style="left:1759.5px;top:658.0px;font-size:14px;line-height:20px;color:#1f1f1f;width:47.4px;overflow:hidden;">Ур. ч. пола</span>
<div class="r" style="left:667.0px;top:684.2px;width:1140.4px;height:32.0px;background:#9a9a9a;"></div>
<div class="r" style="left:667.0px;top:683.7px;width:1140.4px;height:1.0px;background:#8a8a8a;"></div>
<svg class="r" style="left:684.8px;top:689.0px;clip-path:inset(0 0 0.0px 0);" width="20.5" height="20.5" viewBox="0 0 24 24"><path fill="#4a4a4a" d="M19,3H5C3.89,3 3,3.89 3,5V19A2,2 0 0,0 5,21H19A2,2 0 0,0 21,19V5C21,3.89 20.1,3 19,3M19,5V19H5V5H19Z"/></svg>
<span class="t" id="t75" style="left:748.2px;top:690.0px;font-size:14px;line-height:20px;color:#1f1f1f;width:72.8px;overflow:hidden;letter-spacing:0.332px;">новая</span>
<span class="t" id="t76" style="left:837.9px;top:690.0px;font-size:14px;line-height:20px;color:#1f1f1f;width:271.3px;overflow:hidden;">Базовая стена:ADSK_Внутренняя_Кирпичная</span>
<span class="t" id="t77" style="left:1125.7px;top:690.0px;font-size:14px;line-height:20px;color:#1f1f1f;width:175.1px;overflow:hidden;">Типы трубопроводов:ADSK_</span>
<span class="t" id="t78" style="left:1317.5px;top:690.0px;font-size:14px;line-height:20px;color:#1f1f1f;width:206.4px;overflow:hidden;letter-spacing:-0.438px;">2R3hAQDmrDNRT9SrlZug1R</span>
<span class="t" id="t79" style="left:1540.5px;top:690.0px;font-size:14px;line-height:20px;color:#1f1f1f;width:202.6px;overflow:hidden;letter-spacing:-0.300px;">1WqyRFc8D2QBlc3GoJn9kh</span>
<span class="t" id="t80" style="left:1759.5px;top:690.0px;font-size:14px;line-height:20px;color:#1f1f1f;width:47.4px;overflow:hidden;">Этаж 2</span>
<div class="r" style="left:667.0px;top:716.2px;width:1140.4px;height:32.0px;background:#949494;"></div>
<div class="r" style="left:667.0px;top:715.7px;width:1140.4px;height:1.0px;background:#8a8a8a;"></div>
<svg class="r" style="left:684.8px;top:721.0px;clip-path:inset(0 0 0.0px 0);" width="20.5" height="20.5" viewBox="0 0 24 24"><path fill="#4a4a4a" d="M19,3H5C3.89,3 3,3.89 3,5V19A2,2 0 0,0 5,21H19A2,2 0 0,0 21,19V5C21,3.89 20.1,3 19,3M19,5V19H5V5H19Z"/></svg>
<span class="t" id="t81" style="left:748.2px;top:722.0px;font-size:14px;line-height:20px;color:#1f1f1f;width:72.8px;overflow:hidden;letter-spacing:0.332px;">новая</span>
<span class="t" id="t82" style="left:837.9px;top:722.0px;font-size:14px;line-height:20px;color:#1f1f1f;width:271.3px;overflow:hidden;">Базовая стена:ADSK_Внутренняя_Кирпичная</span>
<span class="t" id="t83" style="left:1125.7px;top:722.0px;font-size:14px;line-height:20px;color:#1f1f1f;width:175.1px;overflow:hidden;">ADSK_ФасоннаяЧасть_ПП_</span>
<span class="t" id="t84" style="left:1317.5px;top:722.0px;font-size:14px;line-height:20px;color:#1f1f1f;width:206.4px;overflow:hidden;letter-spacing:-0.250px;">0iFRmpnIr9IuSMyqh5ASD9</span>
<span class="t" id="t85" style="left:1540.5px;top:722.0px;font-size:14px;line-height:20px;color:#1f1f1f;width:202.6px;overflow:hidden;letter-spacing:-0.444px;">1ZCypKGr5FUPqSAhN19HDF</span>
<span class="t" id="t86" style="left:1759.5px;top:722.0px;font-size:14px;line-height:20px;color:#1f1f1f;width:47.4px;overflow:hidden;">Этаж 3</span>
<div class="r" style="left:667.0px;top:748.2px;width:1140.4px;height:32.0px;background:#9a9a9a;"></div>
<div class="r" style="left:667.0px;top:747.7px;width:1140.4px;height:1.0px;background:#8a8a8a;"></div>
<svg class="r" style="left:684.8px;top:753.0px;clip-path:inset(0 0 0.0px 0);" width="20.5" height="20.5" viewBox="0 0 24 24"><path fill="#4a4a4a" d="M19,3H5C3.89,3 3,3.89 3,5V19A2,2 0 0,0 5,21H19A2,2 0 0,0 21,19V5C21,3.89 20.1,3 19,3M19,5V19H5V5H19Z"/></svg>
<span class="t" id="t87" style="left:748.2px;top:754.0px;font-size:14px;line-height:20px;color:#1f1f1f;width:72.8px;overflow:hidden;letter-spacing:0.332px;">новая</span>
<span class="t" id="t88" style="left:837.9px;top:754.0px;font-size:14px;line-height:20px;color:#1f1f1f;width:271.3px;overflow:hidden;letter-spacing:-0.130px;">Перекрытие:ADSK_Перекрытие_Плита_Бетон</span>
<span class="t" id="t89" style="left:1125.7px;top:754.0px;font-size:14px;line-height:20px;color:#1f1f1f;width:175.1px;overflow:hidden;">Типы трубопроводов:ADSK_</span>
<span class="t" id="t90" style="left:1317.5px;top:754.0px;font-size:14px;line-height:20px;color:#1f1f1f;width:206.4px;overflow:hidden;letter-spacing:-0.031px;">1DKvWivnzFJOUGqn3v4FvF</span>
<span class="t" id="t91" style="left:1540.5px;top:754.0px;font-size:14px;line-height:20px;color:#1f1f1f;width:202.6px;overflow:hidden;letter-spacing:-0.415px;">10vR$sprzEXQ8$xrh_WEsZ</span>
<span class="t" id="t92" style="left:1759.5px;top:754.0px;font-size:14px;line-height:20px;color:#1f1f1f;width:47.4px;overflow:hidden;">Этаж 2</span>
<div class="r" style="left:667.0px;top:780.2px;width:1140.4px;height:23.3px;background:#949494;"></div>
<div class="r" style="left:667.0px;top:779.7px;width:1140.4px;height:1.0px;background:#8a8a8a;"></div>
<svg class="r" style="left:684.8px;top:785.0px;clip-path:inset(0 0 2.2px 0);" width="20.5" height="20.5" viewBox="0 0 24 24"><path fill="#4a4a4a" d="M19,3H5C3.89,3 3,3.89 3,5V19A2,2 0 0,0 5,21H19A2,2 0 0,0 21,19V5C21,3.89 20.1,3 19,3M19,5V19H5V5H19Z"/></svg>
<span class="t" id="t93" style="left:748.2px;top:786.0px;font-size:14px;line-height:20px;color:#1f1f1f;width:72.8px;overflow:hidden;height:17.5px;overflow:hidden;letter-spacing:0.332px;">новая</span>
<span class="t" id="t94" style="left:837.9px;top:786.0px;font-size:14px;line-height:20px;color:#1f1f1f;width:271.3px;overflow:hidden;height:17.5px;overflow:hidden;">Базовая стена:ADSK_Внутренняя_Кирпичная</span>
<span class="t" id="t95" style="left:1125.7px;top:786.0px;font-size:14px;line-height:20px;color:#1f1f1f;width:175.1px;overflow:hidden;height:17.5px;overflow:hidden;">Соеденитель Norma Rapid:С</span>
<span class="t" id="t96" style="left:1317.5px;top:786.0px;font-size:14px;line-height:20px;color:#1f1f1f;width:206.4px;overflow:hidden;height:17.5px;overflow:hidden;letter-spacing:-0.012px;">0iFRmpnIr9IuSMyqh5AJwV</span>
<span class="t" id="t97" style="left:1540.5px;top:786.0px;font-size:14px;line-height:20px;color:#1f1f1f;width:202.6px;overflow:hidden;height:17.5px;overflow:hidden;letter-spacing:-0.286px;">1$oRUwx9H5kwULh5OlCdFv</span>
<span class="t" id="t98" style="left:1759.5px;top:786.0px;font-size:14px;line-height:20px;color:#1f1f1f;width:47.4px;overflow:hidden;height:17.5px;overflow:hidden;">Ур. ч. пола</span>
<div class="r" style="left:731.0px;top:524.7px;width:1.1px;height:278.8px;background:#3a3a3a;"></div>
<div class="r" style="left:821.0px;top:524.7px;width:1.1px;height:278.8px;background:#3a3a3a;"></div>
<div class="r" style="left:1109.2px;top:524.7px;width:1.1px;height:278.8px;background:#3a3a3a;"></div>
<div class="r" style="left:1300.8px;top:524.7px;width:1.1px;height:278.8px;background:#3a3a3a;"></div>
<div class="r" style="left:1523.9px;top:524.7px;width:1.1px;height:278.8px;background:#3a3a3a;"></div>
<div class="r" style="left:1743.1px;top:524.7px;width:1.1px;height:278.8px;background:#3a3a3a;"></div>
<div class="r" style="left:1807.4px;top:461.0px;width:7.6px;height:342.5px;background:#3d3d3d;"></div>
<div class="r" style="left:1807.4px;top:461.0px;width:7.6px;height:8.0px;background:#2e5e6e;"></div>
<div class="r" style="left:667.0px;top:803.2px;width:1148.0px;height:7.3px;background:#4a4a4a;border-radius:0 0 3px 3px;"></div>
<div class="r" style="left:667.0px;top:803.2px;width:831.4px;height:7.3px;background:#2e5e6e;border-radius:0 0 0 3px;"></div>
<div class="r" style="left:1823.0px;top:36.0px;width:36.0px;height:777.0px;background:#3b3b3b;"></div>
<div class="r" style="left:1823.0px;top:127.5px;width:36.0px;height:1.0px;background:#545454;"></div>
<div class="r" style="left:1823.0px;top:396.5px;width:36.0px;height:1.0px;background:#545454;"></div>
<div class="r" style="left:1823.0px;top:445.5px;width:36.0px;height:1.0px;background:#545454;"></div>
<div class="r" style="left:1823.0px;top:627.0px;width:36.0px;height:1.0px;background:#545454;"></div>
<div class="r" style="left:1823.0px;top:720.5px;width:36.0px;height:1.0px;background:#545454;"></div>
<svg class="r" style="left:1828.0px;top:47.0px" width="26" height="25" viewBox="0 0 26 25"><g fill="none" stroke="#a6a6a6" stroke-width="1.500" stroke-linecap="round"><path d="M10 17.500H7.500a5 5 0 0 1-1-9.900a6.500 6.500 0 0 1 12.800 0a5 5 0 0 1-0.800 9.900H16"/><path d="M13 24V8.500M13 13.500l-3.500-3.500M13 16l3.500-3.500"/></g></svg>
<svg class="r" style="left:1827.0px;top:90.0px" width="28" height="28" viewBox="0 0 28 28"><g fill="none" stroke="#a6a6a6" stroke-width="1.400"><path d="M10 17.500H1.700V1.700H24.500V9M4.500 17.500v2.500h5.500"/><path d="M15 11.500h-3.300v3.300M22 11.500h3.300v3.300M15 25.500h-3.300v-3.300M22 25.500h3.300v-3.300"/></g><path d="M18.500 13.500l4.300 2.500v5l-4.300 2.500l-4.300-2.500v-5z" fill="#a6a6a6"/></svg>
<svg class="r" style="left:1827.0px;top:146.0px" width="28" height="15" viewBox="0 0 28 15"><g fill="none" stroke="#a6a6a6" stroke-width="1.400"><rect x="1" y="1.700" width="26" height="7.600"/><path d="M0.300 13.300H27.700"/><path d="M4.500 9V6.500M8 9V4.500M11.500 9V6.500M15 9V4.500M18.500 9V6.500M22 9V4.500M25 9V6.500" stroke-width="1.100"/></g></svg>
<svg class="r" style="left:1827.0px;top:182.0px" width="28" height="30" viewBox="0 0 28 30"><path d="M18.700 1.200V20.400L9.600 29V10.600z" fill="#858585"/><path d="M1.500 18.500L10 12h16.500L18 18.500z" fill="none" stroke="#a6a6a6" stroke-width="1.300"/></svg>
<svg class="r" style="left:1828.0px;top:229.0px" width="25" height="24" viewBox="0 0 25 24"><g fill="none" stroke="#a6a6a6" stroke-width="1.200"><rect x="1" y="6" width="17" height="17"/><path d="M1 6l6-5h17l-6 5M24 1v17l-6 5M7 1v17l-6 5M7 18h17"/></g><path d="M9.500 6l6-5v17l-6 5z" fill="#8a8a8a"/></svg>
<svg class="r" style="left:1827.0px;top:273.0px" width="29" height="23" viewBox="0 0 29 23"><g fill="none" stroke="#a6a6a6" stroke-width="1.400"><path d="M5 1.200h21.500v18.500H1.200V5z"/><path d="M2.500 21.800h26v-17" stroke-width="1.200"/><path d="M13.500 1v18.500M1.500 10.500h25" stroke-dasharray="3 1.500" stroke-width="1.100"/><path d="M19 19.500v-4h7.500" /></g></svg>
<svg class="r" style="left:1829.0px;top:317.0px" width="24" height="24" viewBox="0 0 24 24"><circle cx="12" cy="12" r="7.600" fill="none" stroke="#a6a6a6" stroke-width="2"/><circle cx="12" cy="12" r="3.600" fill="#a6a6a6"/><path d="M12 0.500v4M12 19.500v4M0.500 12h4M19.500 12h4" stroke="#a6a6a6" stroke-width="2"/></svg>
<svg class="r" style="left:1827.0px;top:359.0px" width="28" height="28" viewBox="0 0 28 28"><g fill="none" stroke="#a6a6a6" stroke-width="1.300"><circle cx="14" cy="14" r="12.600"/><path d="M8.500 21V8.500c2-1.200 4-1.200 6 0s4 1.200 6 0v7c-2 1.200-4 1.200-6 0s-4-1.200-6 0"/></g></svg>
<svg class="r" style="left:1825.0px;top:405.0px" width="32" height="34" viewBox="0 0 32 34"><g fill="none" stroke="#a6a6a6" stroke-width="1.200"><path d="M2 22L30 6M2 32L30 17M3 13l22 12M14 6l17 11"/></g><g font-family="Liberation Sans, sans-serif" font-size="7" fill="#a6a6a6"><text x="1" y="15">1</text><text x="11" y="7">2</text></g></svg>
<svg class="r" style="left:1829.0px;top:459.0px" width="24" height="24" viewBox="0 0 24 24"><rect x="0.700" y="0.700" width="22.600" height="22.600" fill="none" stroke="#a6a6a6" stroke-width="1.200" stroke-dasharray="2 2"/><g fill="none" stroke="#a6a6a6" stroke-width="1.200"><path d="M12 5.500l5.800 3.300v6.600L12 18.700l-5.800-3.300V8.800z"/><path d="M6.200 8.800L12 12.200l5.800-3.400M12 12.200v6.500"/></g></svg>
<svg class="r" style="left:1829.0px;top:503.0px" width="24" height="24" viewBox="0 0 24 24"><rect x="0.700" y="0.700" width="22.600" height="22.600" fill="none" stroke="#a6a6a6" stroke-width="1.200" stroke-dasharray="2 2"/><g transform="translate(4.500 4.500) scale(0.625)"><path fill="#a6a6a6" d="M12,9A3,3 0 0,0 9,12A3,3 0 0,0 12,15A3,3 0 0,0 15,12A3,3 0 0,0 12,9M12,17A5,5 0 0,1 7,12A5,5 0 0,1 12,7A5,5 0 0,1 17,12A5,5 0 0,1 12,17M12,4.5C7,4.5 2.73,7.61 1,12C2.73,16.39 7,19.5 12,19.5C17,19.5 21.27,16.39 23,12C21.27,7.61 17,4.5 12,4.5Z"/></g></svg>
<svg class="r" style="left:1829.0px;top:547.0px" width="24" height="24" viewBox="0 0 24 24"><rect x="0.700" y="0.700" width="22.600" height="22.600" fill="none" stroke="#a6a6a6" stroke-width="1.200" stroke-dasharray="2 2"/><g transform="translate(4.500 4.500) scale(0.625)"><path fill="#a6a6a6" d="M11.83,9L15,12.16C15,12.11 15,12.05 15,12A3,3 0 0,0 12,9C11.94,9 11.89,9 11.83,9M7.53,9.8L9.08,11.35C9.03,11.56 9,11.77 9,12A3,3 0 0,0 12,15C12.22,15 12.44,14.97 12.65,14.92L14.2,16.47C13.53,16.8 12.79,17 12,17A5,5 0 0,1 7,12C7,11.21 7.2,10.47 7.53,9.8M2,4.27L4.28,6.55L4.73,7C3.08,8.3 1.78,10 1,12C2.73,16.39 7,19.5 12,19.5C13.55,19.5 15.03,19.2 16.38,18.66L16.81,19.08L19.73,22L21,20.73L3.27,3M12,7A5,5 0 0,1 17,12C17,12.64 16.87,13.26 16.64,13.82L19.57,16.75C21.07,15.5 22.27,13.86 23,12C21.27,7.61 17,4.5 12,4.5C10.6,4.5 9.26,4.75 8,5.2L10.17,7.35C10.74,7.13 11.35,7 12,7Z"/></g></svg>
<svg class="r" style="left:1829.0px;top:591.0px" width="27" height="27" viewBox="0 0 27 27"><path d="M10 0.700H0.700V23.300H10" fill="none" stroke="#a6a6a6" stroke-width="1.200" stroke-dasharray="2 2"/><path d="M0.700 0.700H23.300V10" fill="none" stroke="#a6a6a6" stroke-width="1.200" stroke-dasharray="2 2"/><rect x="10.300" y="10" width="15.700" height="15.800" fill="#8c8c8c"/><path d="M13.800 13.500l8.700 8.700M22.500 13.500l-8.700 8.700" stroke="#2f2f2f" stroke-width="1.300"/></svg>
<div class="r" style="left:1825.2px;top:636.0px;width:31.6px;height:31.6px;background:#595959;"></div>
<svg class="r" style="left:1829.0px;top:640.0px" width="24" height="24" viewBox="0 0 24 24"><path d="M2.500 4.500L12 1.500l9.500 3v13L14 23L2.500 17.500z" fill="#8e8e8e"/><path d="M2.500 4.500L14 8v15" fill="none" stroke="#595959" stroke-width="1.200"/><path d="M14 8l7.500-3.500" stroke="#595959" stroke-width="1.200"/></svg>
<div class="r" style="left:1825.2px;top:680.0px;width:31.6px;height:32.0px;background:#595959;"></div>
<svg class="r" style="left:1827.0px;top:684.0px" width="28" height="24" viewBox="0 0 28 24"><g fill="none" stroke="#8e8e8e" stroke-width="1.800"><ellipse cx="14" cy="12" rx="11.500" ry="6"/><ellipse cx="14" cy="12" rx="5.500" ry="10.500"/></g><path d="M14 8v4.500l-3.500 3M14 12.500l3.500 3" fill="none" stroke="#a8a8a8" stroke-width="1"/></svg>
<svg class="r" style="left:1825.0px;top:795.0px" width="5" height="5" viewBox="0 0 5 5"><path d="M0 5V0l5 5z" fill="#8a8a8a"/></svg>
<div class="r" style="left:1859.0px;top:0.0px;width:1.0px;height:813.0px;background:#1c1c1c;"></div>
<div class="r" style="left:1860.0px;top:0.0px;width:2.0px;height:813.0px;background:#050505;"></div>
<div class="r" style="left:738px;top:308px;width:378px;height:196px;background:#fff;box-shadow:0 11px 15px -7px rgba(0,0,0,.2),0 24px 38px 3px rgba(0,0,0,.14),0 9px 46px 8px rgba(0,0,0,.12);"></div>
<div class="r" style="left:738.0px;top:308.0px;width:378.0px;height:44.0px;background:#555555;"></div>
<span class="t" id="t99" style="top:319.2px;font-size:15px;line-height:21px;color:#ffffff;left:746.3px;letter-spacing:-0.468px;">Создать задачу</span>
<svg class="r" style="left:1086.1px;top:318.3px;" width="24" height="24" viewBox="0 0 24 24"><path fill="#ffffff" d="M19,6.41L17.59,5L12,10.59L6.41,5L5,6.41L10.59,12L5,17.59L6.41,19L12,13.41L17.59,19L19,17.59L13.41,12L19,6.41Z"/></svg>
<div class="r" style="left:754px;top:371px;width:342px;height:35.500px;border:2px solid #2b8aab;border-radius:4px;"></div>
<div class="r" style="left:763.5px;top:369.0px;width:29.5px;height:6.0px;background:#fff;"></div>
<span class="t" id="t100" style="top:364.7px;font-size:9.5px;line-height:13px;color:#2b8aab;left:766.0px;letter-spacing:0.042px;">Тема</span>
<span class="t" id="t101" style="top:381.0px;font-size:14px;line-height:20px;color:#1c1c1c;left:766.1px;letter-spacing:-0.432px;">Список коллизий-1</span>
<div class="r" style="left:868.0px;top:447.0px;width:108.0px;height:35.5px;background:#c4c4c4;border-radius:4px;"></div>
<span class="t" id="t102" style="top:455.2px;font-size:14px;line-height:20px;color:#2e2e2e;left:885.4px;letter-spacing:1.288px;">Отменить</span>
<div class="r" style="left:984.0px;top:447.0px;width:114.0px;height:35.5px;background:#3a8fac;border-radius:4px;"></div>
<span class="t" id="t103" style="top:455.2px;font-size:14px;line-height:20px;color:#ffffff;left:1000.8px;letter-spacing:1.340px;">Сохранить</span>
</div>
</body></html>
